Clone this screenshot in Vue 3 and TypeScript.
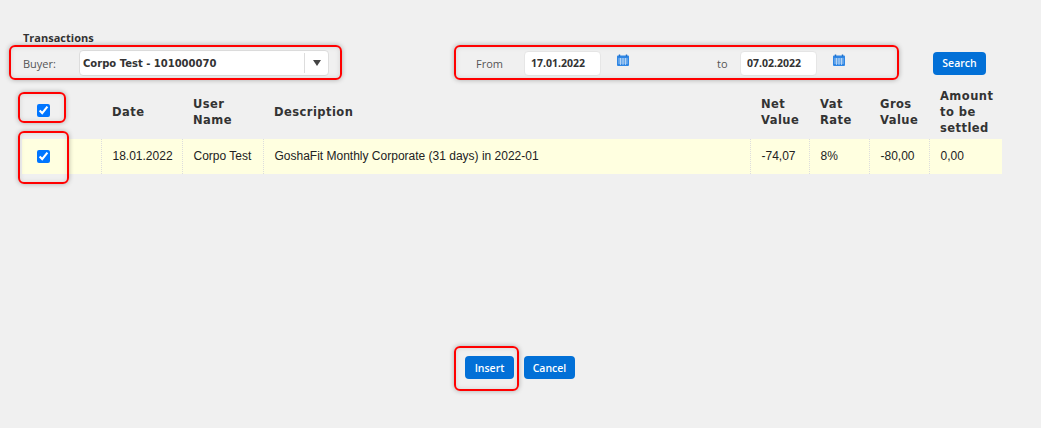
<script setup lang="ts">
const columns = [
  { key: "date", label: "Date", value: "18.01.2022" },
  { key: "user", label: "User Name", value: "Corpo Test" },
  { key: "description", label: "Description", value: "GoshaFit Monthly Corporate (31 days) in 2022-01" },
  { key: "net", label: "Net Value", value: "-74,07" },
  { key: "vat", label: "Vat Rate", value: "8%" },
  { key: "gross", label: "Gros Value", value: "-80,00" },
  { key: "settled", label: "Amount to be settled", value: "0,00" },
];

const marks = ["buyer", "dates", "check-all", "check-row", "insert"];
</script>

<template>
  <div class="page">
    <h1 class="title">Transactions</h1>

    <div class="filters">
      <div class="buyer">
        <label class="label buyer-label">Buyer:</label>
        <div class="select">
          <span class="select-text">Corpo Test - 101000070</span>
          <span class="select-btn"><i class="arrow"></i></span>
        </div>
      </div>

      <div class="dates">
        <label class="label from-label">From</label>
        <input class="date" value="17.01.2022" />
        <svg class="cal" viewBox="0 0 12 12">
          <path d="M0 2.5A1 1 0 0 1 1 1.5H11A1 1 0 0 1 12 2.5V11A1 1 0 0 1 11 12H1A1 1 0 0 1 0 11Z" fill="#2f86e4" />
          <path d="M2.5 0.5V2.5M9.5 0.5V2.5" stroke="#1f6fc8" stroke-width="1.4" />
          <path d="M1.2 5H10.8M1.2 7H10.8M1.2 9H10.8M3.5 4V11M6 4V11M8.5 4V11" stroke="#d5e6f8" stroke-width="0.7" />
        </svg>
        <label class="label to-label">to</label>
        <input class="date" value="07.02.2022" />
        <svg class="cal" viewBox="0 0 12 12">
          <path d="M0 2.5A1 1 0 0 1 1 1.5H11A1 1 0 0 1 12 2.5V11A1 1 0 0 1 11 12H1A1 1 0 0 1 0 11Z" fill="#2f86e4" />
          <path d="M2.5 0.5V2.5M9.5 0.5V2.5" stroke="#1f6fc8" stroke-width="1.4" />
          <path d="M1.2 5H10.8M1.2 7H10.8M1.2 9H10.8M3.5 4V11M6 4V11M8.5 4V11" stroke="#d5e6f8" stroke-width="0.7" />
        </svg>
      </div>

      <button class="btn search">Search</button>
    </div>

    <div class="table">
      <div class="head">
        <div class="check-cell"><input type="checkbox" checked /></div>
        <div v-for="c in columns" :key="c.key" class="th">{{ c.label }}</div>
      </div>
      <div class="row">
        <div class="check-cell"><input type="checkbox" checked /></div>
        <div v-for="c in columns" :key="c.key" class="td">{{ c.value }}</div>
      </div>
    </div>

    <div class="actions">
      <button class="btn insert">Insert</button>
      <button class="btn cancel">Cancel</button>
    </div>

    <div v-for="m in marks" :key="m" class="mark" :class="m"></div>
  </div>
</template>

<style>
html,
body {
  background: #f0f0f0;
}
</style>

<style scoped>
.page {
  position: relative;
  box-sizing: border-box;
  height: 428px;
  padding: 30px 39px 0 22px;
  background: #f0f0f0;
  overflow: hidden;
  font-family: "Liberation Sans", Arial, sans-serif;
  font-size: 12px;
  color: #222;
}

.title {
  margin: 0 0 0 1px;
  font: 700 11px/15px "Open Sans", sans-serif;
  color: #333;
}

.filters {
  display: flex;
  align-items: center;
  height: 26px;
  margin-top: 5px;
}

.label {
  font: 400 11px/1 "Open Sans", sans-serif;
  color: #555;
}

.buyer {
  display: flex;
  align-items: center;
  width: 432px;
}

.buyer-label {
  width: 57px;
  padding-left: 1px;
  box-sizing: border-box;
}

.select {
  display: flex;
  align-items: center;
  box-sizing: border-box;
  width: 250px;
  height: 26px;
  background: #fff;
  border: 1px solid #ddd;
  border-radius: 4px;
}

.select-text {
  flex: 1;
  padding-left: 3px;
  font: 700 10px "DejaVu Sans", sans-serif;
  color: #333;
}

.select-btn {
  display: flex;
  align-items: center;
  justify-content: center;
  width: 23px;
  height: 20px;
  border-left: 1px solid #ddd;
}

.arrow {
  width: 0;
  height: 0;
  border-left: 4.5px solid transparent;
  border-right: 4.5px solid transparent;
  border-top: 6px solid #444;
}

.dates {
  display: flex;
  align-items: center;
  width: 479px;
}

.from-label {
  width: 48px;
  margin-left: 22px;
}

.to-label {
  width: 23px;
  margin-left: 88px;
}

.date {
  box-sizing: border-box;
  width: 77px;
  height: 25px;
  padding: 0 6px;
  background: #fff;
  border: 1px solid #e6e6e6;
  border-radius: 4px;
  outline: none;
  font: 700 10.5px "Open Sans", sans-serif;
  color: #333;
}

.cal {
  width: 12px;
  height: 12px;
  margin: -7px 0 0 16px;
}

.btn {
  height: 23px;
  padding: 0;
  background: #0270d7;
  border: none;
  border-radius: 4px;
  font: 600 10.5px "Open Sans", sans-serif;
  color: #fff;
}

.search {
  width: 53px;
}

.table {
  margin-top: 9px;
}

.head,
.row {
  display: grid;
  grid-template-columns: 79px 81px 81px 487px 59px 60px 60px 73px;
}

.head {
  height: 54px;
  align-items: center;
}

.th {
  padding-left: 11px;
  font: 700 11.5px/16px "DejaVu Sans", sans-serif;
  letter-spacing: 0.45px;
  color: #333;
}

.head .th:nth-child(n + 6) {
  padding-right: 4px;
}

.head .check-cell {
  padding-bottom: 4px;
}

.row {
  height: 35px;
  background: #ffffe0;
  align-items: stretch;
}

.td {
  display: flex;
  align-items: center;
  padding: 0 0 1px 10.5px;
  border-left: 1px dotted #ddd;
  font-size: 12px;
  color: #222;
}

.check-cell {
  display: flex;
  align-items: center;
  padding-left: 15px;
}

.check-cell input {
  width: 13px;
  height: 13px;
  margin: 0;
  accent-color: #0075ff;
}

.actions {
  display: flex;
  gap: 10px;
  margin: 182px 0 0 443px;
}

.insert {
  width: 49px;
}

.cancel {
  width: 51px;
}

.mark {
  position: absolute;
  box-sizing: border-box;
  border: 2px solid #f00;
  border-radius: 6px;
  box-shadow: 0 0 5px rgba(0, 0, 0, 0.3), inset 0 0 5px rgba(0, 0, 0, 0.12);
  pointer-events: none;
}

.mark.buyer {
  left: 9px;
  top: 45px;
  width: 333px;
  height: 35px;
}

.mark.dates {
  left: 454px;
  top: 45px;
  width: 445px;
  height: 35px;
}

.mark.check-all {
  left: 18px;
  top: 92px;
  width: 48px;
  height: 31px;
}

.mark.check-row {
  left: 18px;
  top: 131px;
  width: 51px;
  height: 53px;
}

.mark.insert {
  left: 454px;
  top: 346px;
  width: 65px;
  height: 45px;
}
</style>
